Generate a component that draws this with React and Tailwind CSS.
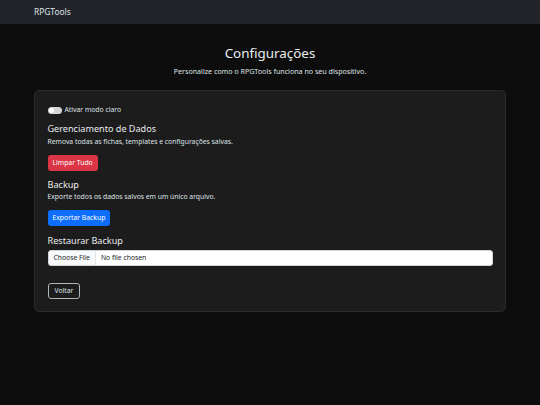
import { useState } from "react";

export default function App() {
  const [lightMode, setLightMode] = useState(false);

  return (
    <div className="min-h-[405px] bg-[#0d0d0d] font-['Noto_Sans',sans-serif] text-[#dee2e6]">
      <nav className="h-[24px] bg-[#212529] flex items-center px-[34px]">
        <span className="text-[8.4px] text-[#dee2e6]">RPGTools</span>
      </nav>

      <div className="px-[34px]">
        <div className="text-center pt-[21px]">
          <h2 className="text-[13.4px] leading-[16px] text-[#e9ecef]">Configurações</h2>
          <p className="text-[7.1px] leading-[10px] mt-[5px] text-[#dee2e6]">
            Personalize como o RPGTools funciona no seu dispositivo.
          </p>
        </div>

        <div className="mt-[14px] bg-[#1c1c1c] border border-[#2a2a2a] rounded-[5px] px-[12.5px] pt-[14px] pb-[12px]">
          <label className="flex items-center gap-[3px] text-[6.8px] leading-[10px]">
            <span
              onClick={() => setLightMode(!lightMode)}
              className="w-[14px] h-[7px] rounded-full bg-[#d6d6d6] flex items-center px-[1px]"
            >
              <span className="w-[5px] h-[5px] rounded-full bg-white" />
            </span>
            Ativar modo claro
          </label>

          <h5 className="mt-[7px] text-[9.1px] leading-[13px] text-[#e9ecef]">Gerenciamento de Dados</h5>
          <p className="mt-[2px] text-[6.8px] leading-[10px]">Remova todas as fichas, templates e configurações salvas.</p>
          <button className="mt-[5px] h-[16px] px-[5px] rounded-[3px] bg-[#dc3545] text-white text-[6.8px]">Limpar Tudo</button>

          <h5 className="mt-[7px] text-[9.1px] leading-[13px] text-[#e9ecef]">Backup</h5>
          <p className="mt-[1px] text-[6.8px] leading-[10px]">Exporte todos os dados salvos em um único arquivo.</p>
          <button className="mt-[5px] h-[16px] px-[5px] rounded-[3px] bg-[#0d6efd] text-white text-[6.8px]">Exportar Backup</button>

          <h5 className="mt-[8px] text-[9.1px] leading-[13px] text-[#e9ecef]">Restaurar Backup</h5>
          <div className="mt-[3px] h-[16px] bg-white rounded-[3px] border border-[#ced4da] flex items-center text-[6.8px] text-[#212529]">
            <span className="h-full px-[5px] flex items-center bg-[#f8f9fa] border-r border-[#dee2e6] rounded-l-[3px]">Choose File</span>
            <span className="px-[5px]">No file chosen</span>
          </div>

          <button className="mt-[17px] h-[16px] px-[6px] rounded-[3px] border border-[#adb5bd] text-[#dee2e6] text-[6.8px]">Voltar</button>
        </div>
      </div>
    </div>
  );
}
